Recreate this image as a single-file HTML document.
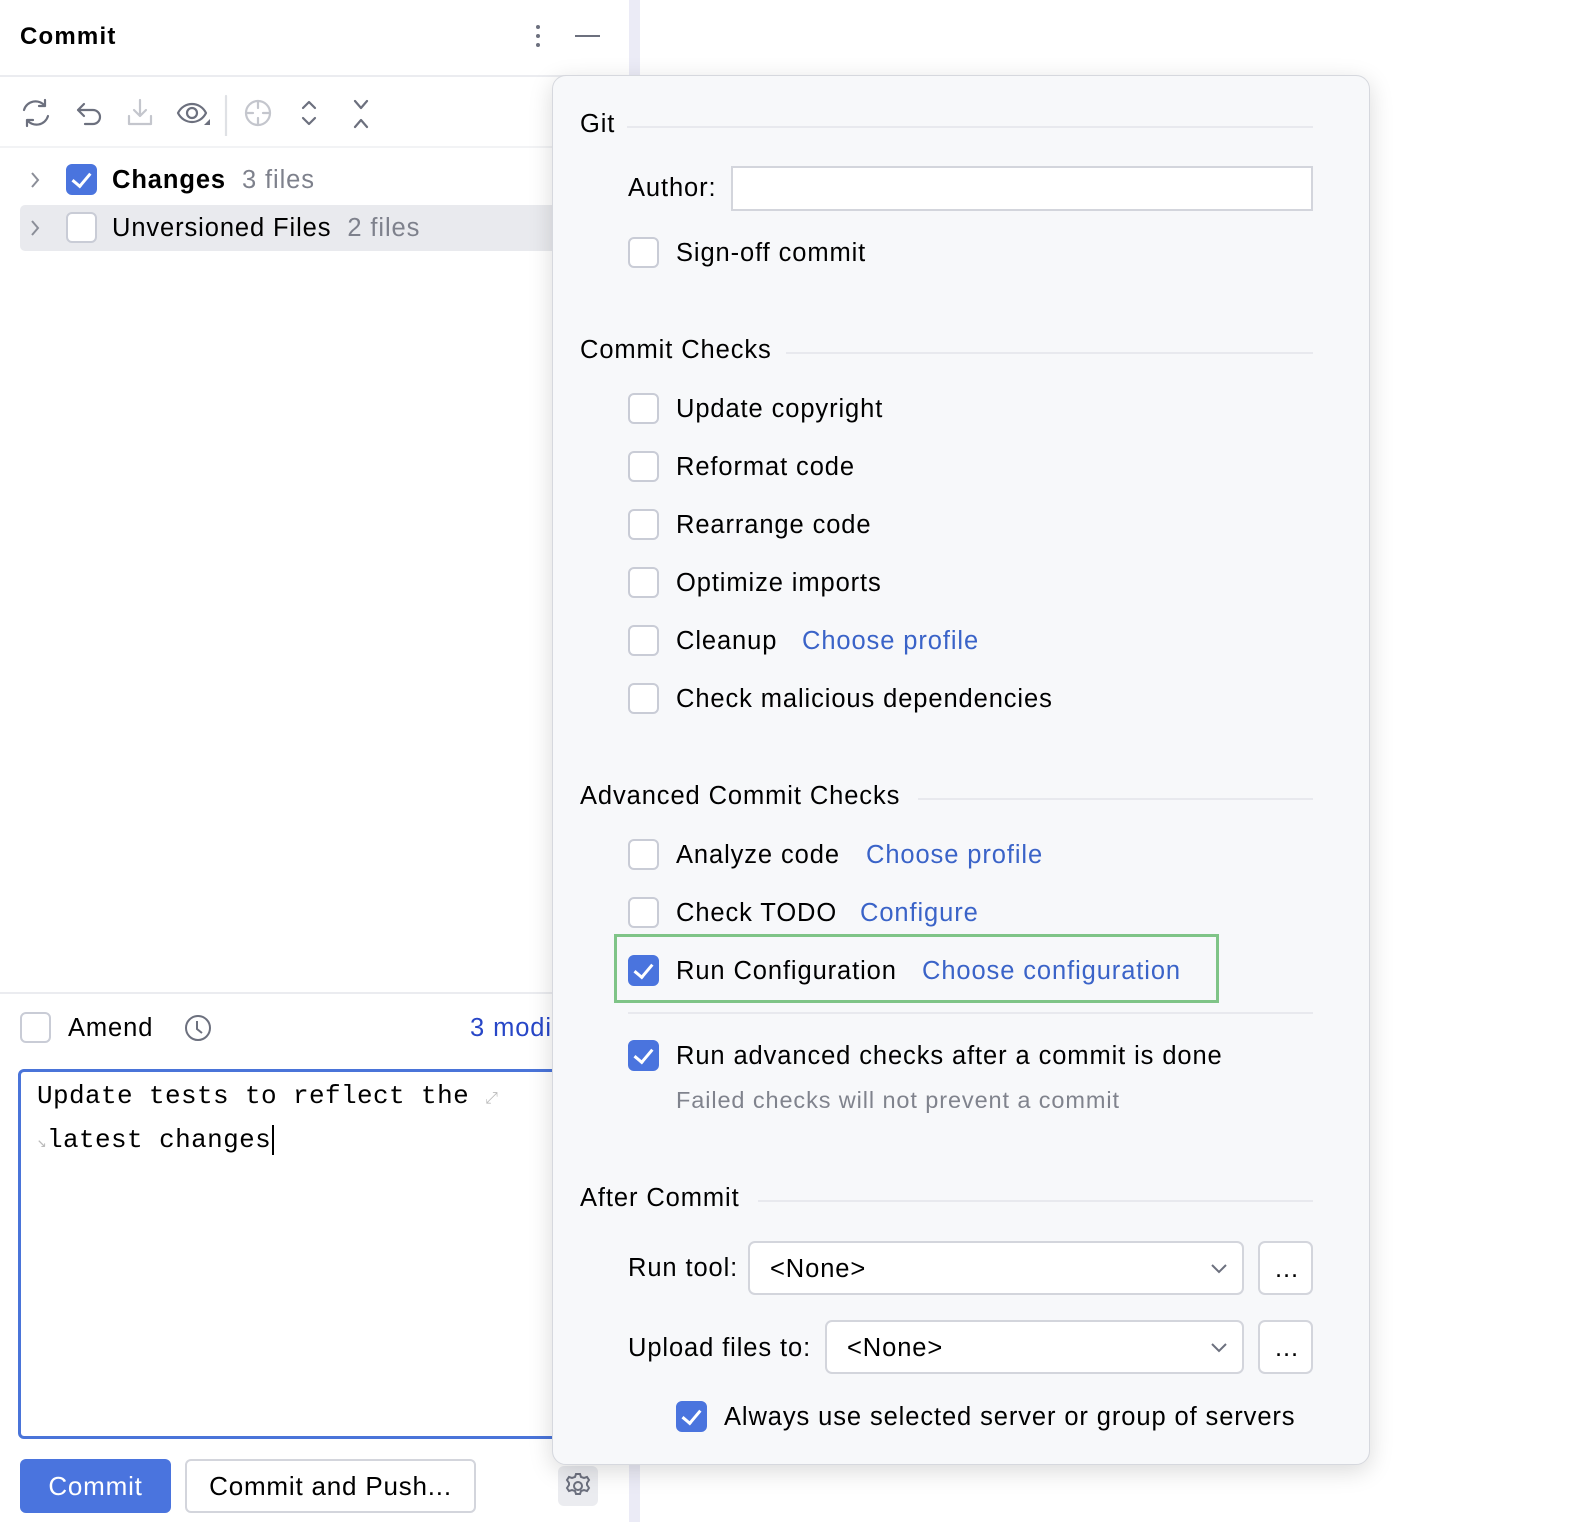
<!DOCTYPE html>
<html><head><meta charset="utf-8"><style>
*{box-sizing:border-box;margin:0;padding:0}
body{width:1596px;height:1522px;position:relative;background:#fff;font-family:"Liberation Sans",sans-serif;color:#000;overflow:hidden}
.a{position:absolute}
.t{position:absolute;white-space:nowrap;line-height:30px;height:30px;font-size:25.5px;letter-spacing:0.9px}
.cb{position:absolute;width:31px;height:31px;border:2px solid #c9ccd6;border-radius:6px;background:#fff}
.cb.on{background:#4a74de;border-color:#4a74de}
.cb.on::after{content:"";position:absolute;left:8px;top:3px;width:8px;height:15px;border:solid #fff;border-width:0 3px 3px 0;transform:rotate(40deg)}
.lk{color:#3a63c8}
.hl{position:absolute;height:2px;background:#e8e9ee}
.combo{position:absolute;background:#fff;border:2px solid #d3d5dc;border-radius:7px}
.chev{position:absolute}
</style></head><body>
<!-- left panel -->
<div class="a" style="left:629px;top:0;width:11px;height:1522px;background:#ebebf6"></div>
<div class="t" style="left:20px;top:22px;font-weight:bold;font-size:24px;letter-spacing:1.2px">Commit</div>
<div class="a" style="left:536px;top:25px;width:4px;height:4px;border-radius:2px;background:#6c707e;box-shadow:0 9px 0 #6c707e,0 18px 0 #6c707e"></div>
<div class="a" style="left:575px;top:35px;width:25px;height:2px;background:#6c707e"></div>
<div class="a" style="left:0;top:75px;width:629px;height:2px;background:#ebecf0"></div>
<svg class="a" style="left:0;top:90px" width="380" height="46" viewBox="0 0 380 46" fill="none" stroke="#6c707e" stroke-width="2.2" stroke-linecap="round" stroke-linejoin="round">
<path d="M24 20a12 12 0 0 1 21-4M48 26a12 12 0 0 1-21 4M45 10v6h-6M27 36v-6h6"/>
<path d="M84 14l-6 6 6 6M78 20h15a7 7 0 0 1 0 14h-8"/>
<g stroke="#c4c6cd"><path d="M140 10v16M134 20l6 6 6-6M129 26v8h22v-8"/></g>
<path d="M178 23c6-12 22-12 28 0c-6 12-22 12-28 0z"/><circle cx="192" cy="23" r="5"/>
<path d="M204 35l6-6v6z" fill="#6c707e" stroke="none"/>
<path d="M226 6v40" stroke="#dfe1e5"/>
<g stroke="#c4c6cd"><circle cx="258" cy="23" r="12"/><path d="M258 11v7M258 28v7M246 23h7M263 23h7"/></g>
<path d="M303 18l6-6 6 6M303 28l6 6 6-6"/>
<path d="M355 11l6 7 6-7M355 37l6-7 6 7"/>
</svg>
<div class="a" style="left:0;top:146px;width:629px;height:2px;background:#f2f3f5"></div>
<svg class="chev" style="left:28px;top:170px" width="14" height="20" fill="none" stroke="#8b8e98" stroke-width="2"><path d="M4 3l6 7-6 7"/></svg>
<div class="cb on" style="left:66px;top:164px"></div>
<div class="t" style="left:112px;top:165px"><b>Changes</b> <span style="color:#7e818c">&nbsp;3 files</span></div>
<div class="a" style="left:20px;top:205px;width:560px;height:46px;background:#e9eaee;border-radius:5px"></div>
<svg class="chev" style="left:28px;top:218px" width="14" height="20" fill="none" stroke="#8b8e98" stroke-width="2"><path d="M4 3l6 7-6 7"/></svg>
<div class="cb" style="left:66px;top:212px"></div>
<div class="t" style="left:112px;top:213px">Unversioned Files <span style="color:#7e818c">&nbsp;2 files</span></div>
<div class="a" style="left:0;top:992px;width:629px;height:2px;background:#ebecf0"></div>
<div class="cb" style="left:20px;top:1012px"></div>
<div class="t" style="left:68px;top:1013px">Amend</div>
<svg class="a" style="left:183px;top:1013px" width="30" height="30" fill="none" stroke="#6c707e" stroke-width="2"><circle cx="15" cy="15" r="12"/><path d="M14 8v8l5 4"/></svg>
<div class="t" style="left:470px;top:1013px;color:#2746c7">3 modified</div>
<div class="a" style="left:18px;top:1069px;width:600px;height:370px;border:3px solid #4a74d9;border-radius:6px"></div>
<div class="t" style="left:37px;top:1081px;font-family:'Liberation Mono',monospace;font-size:26px;letter-spacing:0.4px">Update tests to reflect the <span style="color:#bbb;font-size:16px">⤢</span></div>
<div class="t" style="left:37px;top:1125px;font-family:'Liberation Mono',monospace;font-size:26px;letter-spacing:0.4px"><span style="color:#bbb;font-size:16px">↘</span>latest changes<span style="border-left:2px solid #000;margin-left:1px"></span></div>
<div class="a" style="left:20px;top:1459px;width:151px;height:54px;background:#4a74de;border-radius:6px;color:#fff;font-size:26px;letter-spacing:0.8px;line-height:54px;text-align:center">Commit</div>
<div class="a" style="left:185px;top:1459px;width:291px;height:54px;border:2px solid #d3d5dc;border-radius:6px;font-size:26px;letter-spacing:0.8px;line-height:50px;text-align:center">Commit and Push...</div>
<div class="a" style="left:558px;top:1466px;width:40px;height:40px;background:#ebecf0;border-radius:6px"></div>
<svg class="a" style="left:563px;top:1471px" width="30" height="30" fill="none" stroke="#6c707e" stroke-width="2"><circle cx="15" cy="15" r="4"/><path d="M13 3h4l1 3 3 1 3-1 2 3-2 3v2l2 3-2 3-3-1-3 1-1 3h-4l-1-3-3-1-3 1-2-3 2-3v-2l-2-3 2-3 3 1 3-1z"/></svg>
<!-- popup -->
<div class="a" style="left:552px;top:75px;width:818px;height:1390px;background:#f7f8fa;border:1px solid #d6d8de;border-radius:14px;box-shadow:0 6px 24px rgba(0,0,0,.15)"></div>
<div class="t" style="left:580px;top:109px">Git</div><div class="hl" style="left:627px;top:126px;width:686px"></div>
<div class="t" style="left:628px;top:173px">Author:</div>
<div class="a" style="left:731px;top:166px;width:582px;height:45px;background:#fff;border:2px solid #d3d5dc"></div>
<div class="cb" style="left:628px;top:237px"></div><div class="t" style="left:676px;top:238px">Sign-off commit</div>
<div class="t" style="left:580px;top:335px">Commit Checks</div><div class="hl" style="left:786px;top:352px;width:527px"></div>
<div class="cb" style="left:628px;top:393px"></div><div class="t" style="left:676px;top:394px">Update copyright</div>
<div class="cb" style="left:628px;top:451px"></div><div class="t" style="left:676px;top:452px">Reformat code</div>
<div class="cb" style="left:628px;top:509px"></div><div class="t" style="left:676px;top:510px">Rearrange code</div>
<div class="cb" style="left:628px;top:567px"></div><div class="t" style="left:676px;top:568px">Optimize imports</div>
<div class="cb" style="left:628px;top:625px"></div><div class="t" style="left:676px;top:626px">Cleanup</div><div class="t lk" style="left:802px;top:626px">Choose profile</div>
<div class="cb" style="left:628px;top:683px"></div><div class="t" style="left:676px;top:684px">Check malicious dependencies</div>
<div class="t" style="left:580px;top:781px">Advanced Commit Checks</div><div class="hl" style="left:918px;top:798px;width:395px"></div>
<div class="cb" style="left:628px;top:839px"></div><div class="t" style="left:676px;top:840px">Analyze code</div><div class="t lk" style="left:866px;top:840px">Choose profile</div>
<div class="cb" style="left:628px;top:897px"></div><div class="t" style="left:676px;top:898px">Check TODO</div><div class="t lk" style="left:860px;top:898px">Configure</div>
<div class="a" style="left:614px;top:934px;width:605px;height:69px;border:3px solid #7fc487"></div>
<div class="cb on" style="left:628px;top:955px"></div><div class="t" style="left:676px;top:956px">Run Configuration</div><div class="t lk" style="left:922px;top:956px">Choose configuration</div>
<div class="hl" style="left:628px;top:1012px;width:685px"></div>
<div class="cb on" style="left:628px;top:1040px"></div><div class="t" style="left:676px;top:1041px">Run advanced checks after a commit is done</div>
<div class="t" style="left:676px;top:1085px;color:#80838d;font-size:23.5px;letter-spacing:0.9px">Failed checks will not prevent a commit</div>
<div class="t" style="left:580px;top:1183px">After Commit</div><div class="hl" style="left:758px;top:1200px;width:555px"></div>
<div class="t" style="left:628px;top:1253px">Run tool:</div>
<div class="combo" style="left:748px;top:1241px;width:496px;height:54px"><span class="t" style="left:20px;top:11px">&lt;None&gt;</span><svg class="a" style="left:460px;top:20px" width="18" height="12" fill="none" stroke="#6c707e" stroke-width="2"><path d="M2 2l7 7 7-7"/></svg></div>
<div class="combo" style="left:1258px;top:1241px;width:55px;height:54px"><span class="t" style="left:15px;top:11px">...</span></div>
<div class="t" style="left:628px;top:1333px">Upload files to:</div>
<div class="combo" style="left:825px;top:1320px;width:419px;height:54px"><span class="t" style="left:20px;top:11px">&lt;None&gt;</span><svg class="a" style="left:383px;top:20px" width="18" height="12" fill="none" stroke="#6c707e" stroke-width="2"><path d="M2 2l7 7 7-7"/></svg></div>
<div class="combo" style="left:1258px;top:1320px;width:55px;height:54px"><span class="t" style="left:15px;top:11px">...</span></div>
<div class="cb on" style="left:676px;top:1401px"></div><div class="t" style="left:724px;top:1402px">Always use selected server or group of servers</div>
</body></html>
